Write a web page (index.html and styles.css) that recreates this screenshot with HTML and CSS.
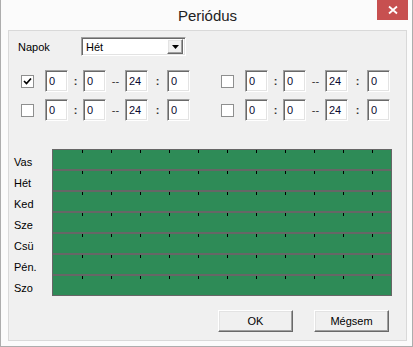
FILE: index.html
```html
<!DOCTYPE html>
<html lang="hu">
<head>
  <meta charset="UTF-8" />
  <title>Periódus</title>
  <link rel="stylesheet" href="styles.css">
</head>
<body>
  <div class="window">
    <div class="titlebar">
      <span></span>
      <span class="title">Periódus</span>
      <button class="close">
        <svg width="10" height="10" viewBox="0 0 10 10">
          <path d="M1 1.5 L9 8.5 M9 1.5 L1 8.5" stroke="#fff" stroke-width="1.8" fill="none"/>
        </svg>
      </button>
    </div>

    <div class="client">
      <div class="days-row">
        <span class="days-label">Napok</span>
        <div class="combo">
          <span class="combo-text">Hét</span>
          <span class="combo-btn">
            <svg width="7" height="4" viewBox="0 0 7 4"><path d="M0 0 H7 L3.5 4 Z" fill="#000"/></svg>
          </span>
        </div>
      </div>

      <div class="periods">
        <div class="period">
          <span class="check">
            <svg width="9" height="9" viewBox="0 0 9 9"><path d="M1 4 L3.5 6.5 L8 1.5" stroke="#000" stroke-width="1.7" fill="none"/></svg>
          </span>
          <span class="edit">0</span><span class="sep">:</span><span class="edit">0</span><span class="sep dash">--</span><span class="edit">24</span><span class="sep wide">:</span><span class="edit">0</span>
        </div>
        <div class="period">
          <span class="check"></span>
          <span class="edit">0</span><span class="sep">:</span><span class="edit">0</span><span class="sep dash">--</span><span class="edit">24</span><span class="sep wide">:</span><span class="edit">0</span>
        </div>
        <div class="period">
          <span class="check"></span>
          <span class="edit">0</span><span class="sep">:</span><span class="edit">0</span><span class="sep dash">--</span><span class="edit">24</span><span class="sep wide">:</span><span class="edit">0</span>
        </div>
        <div class="period">
          <span class="check"></span>
          <span class="edit">0</span><span class="sep">:</span><span class="edit">0</span><span class="sep dash">--</span><span class="edit">24</span><span class="sep wide">:</span><span class="edit">0</span>
        </div>
      </div>

      <div class="schedule">
        <div class="day-labels">
          <span>Vas</span>
          <span>Hét</span>
          <span>Ked</span>
          <span>Sze</span>
          <span>Csü</span>
          <span>Pén.</span>
          <span>Szo</span>
        </div>
        <div class="chart">
          <div class="chart-row"></div>
          <div class="chart-row"></div>
          <div class="chart-row"></div>
          <div class="chart-row"></div>
          <div class="chart-row"></div>
          <div class="chart-row"></div>
          <div class="chart-row"></div>
        </div>
      </div>

      <div class="buttons">
        <button class="btn">OK</button>
        <button class="btn">Mégsem</button>
      </div>
    </div>
  </div>
</body>
</html>
```

FILE: styles.css
```css
* {
  box-sizing: border-box;
}

body {
  margin: 0;
  background: #fbfbfb;
  font-family: "Liberation Sans", Arial, sans-serif;
  font-size: 11px;
  color: #000;
}

.window {
  width: 413px;
  height: 347px;
  background: #fbfbfb;
  border: 1px solid #adadad;
  border-top: none;
  padding: 0 5px 5px 7px;
  display: flex;
  flex-direction: column;
}

.titlebar {
  height: 30px;
  display: grid;
  grid-template-columns: 1fr auto 1fr;
  align-items: center;
}

.title {
  font-size: 15px;
  color: #222;
  padding-top: 1px;
}

.close {
  justify-self: end;
  align-self: start;
  width: 31px;
  height: 20px;
  margin-right: -1px;
  border: none;
  padding: 0;
  background: #c75050;
  display: flex;
  align-items: center;
  justify-content: center;
}

.client {
  flex: 1;
  border: 1px solid #d9d9d9;
  background: #f0f0f0;
  display: flex;
  flex-direction: column;
}

/* sunken / raised 3d borders */
.combo,
.edit {
  border: 1px solid;
  border-color: #a0a0a0 #fff #fff #a0a0a0;
  box-shadow: inset 1px 1px 0 #696969, inset -1px -1px 0 #e3e3e3;
  background: #fff;
}

.combo-btn,
.btn {
  border: 1px solid;
  border-color: #fff #696969 #696969 #fff;
  box-shadow: inset -1px -1px 0 #a0a0a0, inset 1px 1px 0 #e3e3e3;
  background: #f0f0f0;
}

.days-row {
  display: flex;
  align-items: center;
  height: 19px;
  margin: 6px 0 0 9px;
}

.days-label {
  width: 63px;
}

.combo {
  width: 105px;
  height: 19px;
  display: flex;
  align-items: center;
  padding: 2px;
}

.combo-text {
  flex: 1;
  padding-left: 2px;
}

.combo-btn {
  width: 16px;
  height: 15px;
  display: flex;
  align-items: center;
  justify-content: center;
}

.periods {
  display: grid;
  grid-template-columns: 200px 200px;
  row-gap: 7px;
  margin: 14px 0 0 12px;
}

.period {
  display: flex;
  align-items: center;
  height: 22px;
}

.check {
  width: 13px;
  height: 13px;
  margin-right: 11px;
  border: 1px solid #8e8f8f;
  background: #fff;
  display: flex;
  align-items: center;
  justify-content: center;
}

.edit {
  width: 23px;
  height: 22px;
  line-height: 20px;
  padding-left: 3px;
  color: #0a0a30;
}

.sep {
  width: 15px;
  text-align: center;
  font-weight: bold;
  color: #333;
}

.sep.dash {
  width: 19px;
  font-weight: normal;
}

.sep.wide {
  width: 19px;
}

.schedule {
  display: flex;
  margin: 28px 0 0 5px;
}

.day-labels {
  width: 38px;
  padding-top: 3px;
  display: flex;
  flex-direction: column;
}

.day-labels span {
  height: 21px;
  line-height: 21px;
}

.chart {
  width: 340px;
  height: 147px;
  border: 1px solid #666;
  background: #666;
  display: flex;
  flex-direction: column;
  gap: 2px;
}

.chart-row {
  height: 19px;
  background-color: #2e8b57;
  background-image: repeating-linear-gradient(to right, transparent 0 28px, #000 28px 29px);
  background-size: 330px 3px;
  background-position: 1px 0;
  background-repeat: no-repeat;
}

.buttons {
  display: flex;
  justify-content: flex-end;
  gap: 21px;
  margin: 11px 17px 0 0;
}

.btn {
  width: 75px;
  height: 22px;
  font-family: inherit;
  font-size: 11px;
  color: #000;
  padding: 0;
}
```
